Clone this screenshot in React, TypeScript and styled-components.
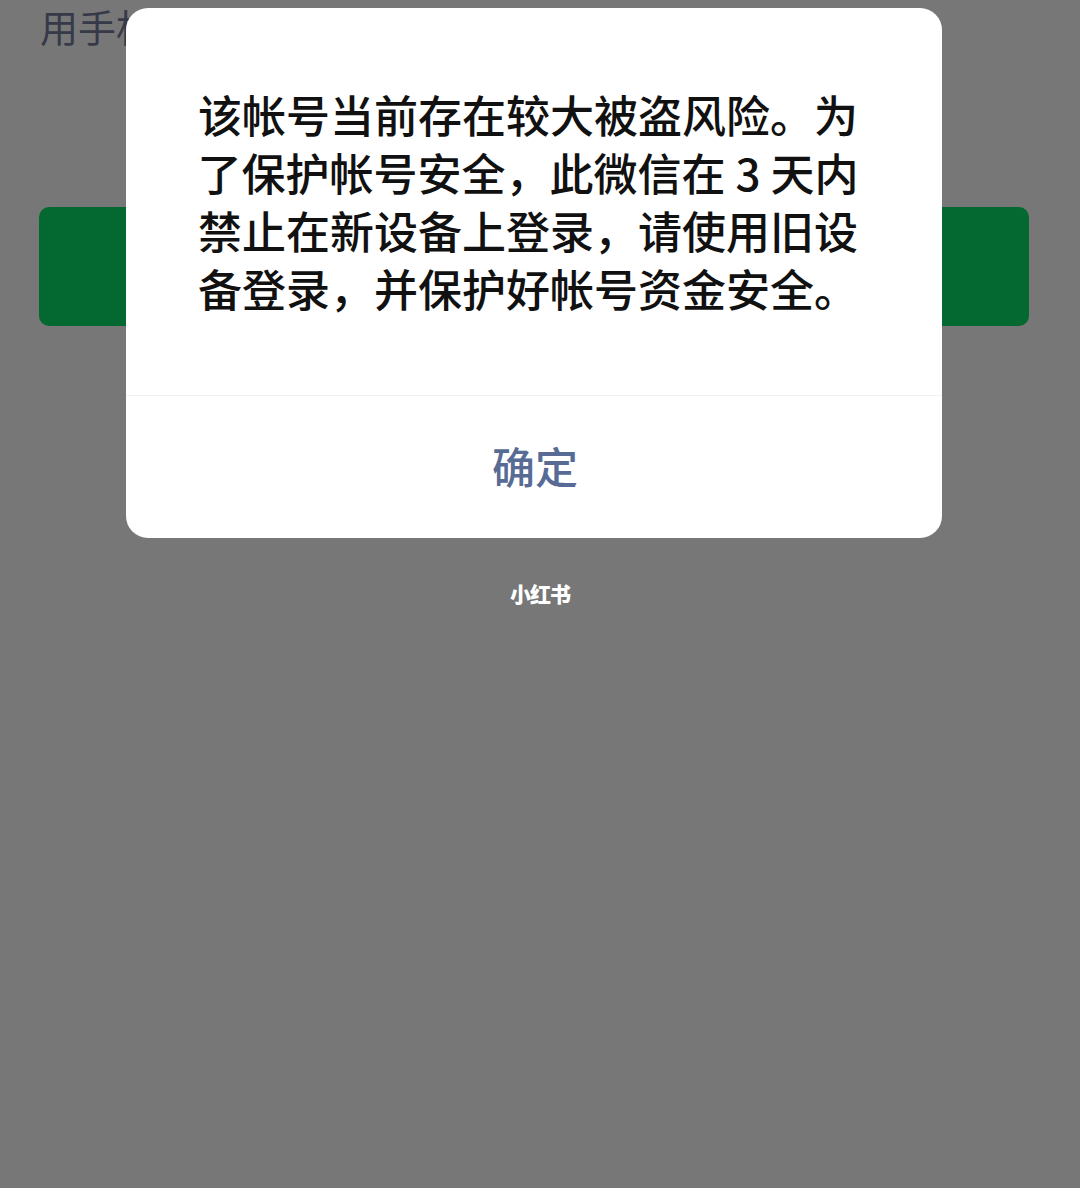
import styled, { createGlobalStyle } from "styled-components";

const GlobalStyle = createGlobalStyle`
  html, body {
    margin: 0;
    padding: 0;
    background: #777777;
  }
  body {
    font-family: "Noto Sans CJK SC", "Noto Sans", sans-serif;
  }
`;

// Login page underneath the mask
const Page = styled.div`
  position: relative;
  width: 1080px;
  height: 1188px;
  overflow: hidden;
  background: #777777;
  box-sizing: border-box;
  padding: 0 51px 0 39px;
`;

const PageTitle = styled.div`
  margin: 0 0 0 1px;
  font-size: 38px;
  line-height: 52px;
  color: #363a48;
  white-space: nowrap;
`;

const LoginButton = styled.div`
  margin-top: 155px;
  height: 119px;
  border-radius: 10px;
  background: #046930;
`;

// Alert dialog
const Dialog = styled.div`
  position: absolute;
  left: 126px;
  top: 8px;
  width: 816px;
  height: 530px;
  background: #ffffff;
  border-radius: 22px;
  display: flex;
  flex-direction: column;
  overflow: hidden;
`;

const Message = styled.div`
  padding: 77px 12px 0 0;
  height: 388px;
  box-sizing: border-box;
  display: flex;
  flex-direction: column;
  align-items: center;
  border-bottom: 1px solid #f0f0f0;
`;

const Line = styled.div`
  font-size: 44px;
  line-height: 58px;
  font-weight: 500;
  color: #111111;
  white-space: nowrap;
  text-align: center;
`;

const Confirm = styled.div`
  flex: 1;
  display: flex;
  align-items: center;
  justify-content: center;
  padding: 0 0 4px 2px;
  font-size: 43px;
  font-weight: 500;
  color: #576b95;
`;

const Watermark = styled.div`
  position: absolute;
  left: 0;
  right: 0;
  top: 578px;
  text-align: center;
  font-size: 21px;
  font-weight: 900;
  color: #ffffff;
  letter-spacing: -1px;
`;

const lines = [
  "该帐号当前存在较大被盗风险。为",
  "了保护帐号安全，此微信在 3 天内",
  "禁止在新设备上登录，请使用旧设",
  "备登录，并保护好帐号资金安全。",
];

export default function App() {
  return (
    <>
      <GlobalStyle />
      <Page>
        <PageTitle>用手机号登录</PageTitle>
        <LoginButton />
        <Dialog>
          <Message>
            {lines.map((l, i) => (
              <Line key={i}>{l}</Line>
            ))}
          </Message>
          <Confirm>确定</Confirm>
        </Dialog>
        <Watermark>小红书</Watermark>
      </Page>
    </>
  );
}
